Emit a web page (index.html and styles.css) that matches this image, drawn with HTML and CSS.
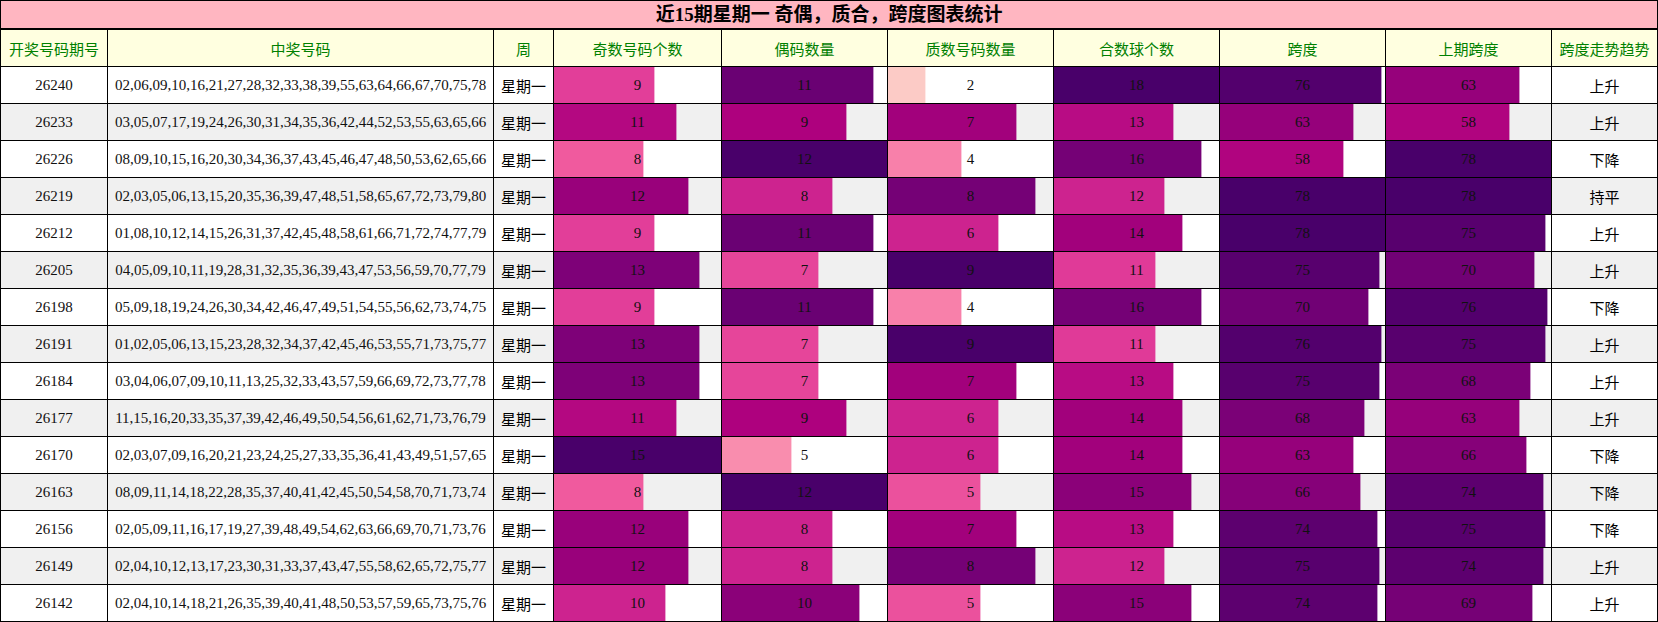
FILE: index.html
```html
<!DOCTYPE html>
<html lang="zh-CN">
<head>
<meta charset="utf-8">
<title>近15期星期一 奇偶，质合，跨度图表统计</title>
<link rel="stylesheet" href="styles.css">
</head>
<body>
<table class="stats">
  <colgroup>
    <col class="w-issue"><col class="w-nums"><col class="w-week">
    <col class="w-bar1"><col class="w-bar"><col class="w-bar"><col class="w-bar"><col class="w-bar"><col class="w-bar">
    <col class="w-trend">
  </colgroup>
  <thead>
    <tr class="title-row"><th colspan="10" class="title">近15期星期一 奇偶，质合，跨度图表统计</th></tr>
    <tr class="head-row">
      <th>开奖号码期号</th><th>中奖号码</th><th>周</th><th>奇数号码个数</th><th>偶码数量</th><th>质数号码数量</th><th>合数球个数</th><th>跨度</th><th>上期跨度</th><th>跨度走势趋势</th>
    </tr>
  </thead>
  <tbody>
    <tr>
      <td>26240</td><td>02,06,09,10,16,21,27,28,32,33,38,39,55,63,64,66,67,70,75,78</td><td class="week">星期一</td>
      <td class="bc"><div class="bw"><span class="bar" style="width:60%;--c:#e23e99"></span><span class="bv">9</span></div></td>
      <td class="bc"><div class="bw"><span class="bar" style="width:91.7%;--c:#6a0173"></span><span class="bv">11</span></div></td>
      <td class="bc"><div class="bw"><span class="bar" style="width:22.2%;--c:#fccbc6"></span><span class="bv">2</span></div></td>
      <td class="bc"><div class="bw"><span class="bar" style="width:100%;--c:#49006a"></span><span class="bv">18</span></div></td>
      <td class="bc"><div class="bw"><span class="bar" style="width:97.4%;--c:#53006d"></span><span class="bv">76</span></div></td>
      <td class="bc"><div class="bw"><span class="bar" style="width:80.8%;--c:#96017b"></span><span class="bv">63</span></div></td>
      <td class="trend">上升</td>
    </tr>
    <tr>
      <td>26233</td><td>03,05,07,17,19,24,26,30,31,34,35,36,42,44,52,53,55,63,65,66</td><td class="week">星期一</td>
      <td class="bc"><div class="bw"><span class="bar" style="width:73.3%;--c:#b40881"></span><span class="bv">11</span></div></td>
      <td class="bc"><div class="bw"><span class="bar" style="width:75%;--c:#ae017e"></span><span class="bv">9</span></div></td>
      <td class="bc"><div class="bw"><span class="bar" style="width:77.8%;--c:#a2017c"></span><span class="bv">7</span></div></td>
      <td class="bc"><div class="bw"><span class="bar" style="width:72.2%;--c:#b80c84"></span><span class="bv">13</span></div></td>
      <td class="bc"><div class="bw"><span class="bar" style="width:80.8%;--c:#96017b"></span><span class="bv">63</span></div></td>
      <td class="bc"><div class="bw"><span class="bar" style="width:74.4%;--c:#b0047f"></span><span class="bv">58</span></div></td>
      <td class="trend">上升</td>
    </tr>
    <tr>
      <td>26226</td><td>08,09,10,15,16,20,30,34,36,37,43,45,46,47,48,50,53,62,65,66</td><td class="week">星期一</td>
      <td class="bc"><div class="bw"><span class="bar" style="width:53.3%;--c:#f05a9e"></span><span class="bv">8</span></div></td>
      <td class="bc"><div class="bw"><span class="bar" style="width:100%;--c:#49006a"></span><span class="bv">12</span></div></td>
      <td class="bc"><div class="bw"><span class="bar" style="width:44.4%;--c:#f880aa"></span><span class="bv">4</span></div></td>
      <td class="bc"><div class="bw"><span class="bar" style="width:88.9%;--c:#750176"></span><span class="bv">16</span></div></td>
      <td class="bc"><div class="bw"><span class="bar" style="width:74.4%;--c:#b0047f"></span><span class="bv">58</span></div></td>
      <td class="bc"><div class="bw"><span class="bar" style="width:100%;--c:#49006a"></span><span class="bv">78</span></div></td>
      <td class="trend">下降</td>
    </tr>
    <tr>
      <td>26219</td><td>02,03,05,06,13,15,20,35,36,39,47,48,51,58,65,67,72,73,79,80</td><td class="week">星期一</td>
      <td class="bc"><div class="bw"><span class="bar" style="width:80%;--c:#99017b"></span><span class="bv">12</span></div></td>
      <td class="bc"><div class="bw"><span class="bar" style="width:66.7%;--c:#cd238f"></span><span class="bv">8</span></div></td>
      <td class="bc"><div class="bw"><span class="bar" style="width:88.9%;--c:#750176"></span><span class="bv">8</span></div></td>
      <td class="bc"><div class="bw"><span class="bar" style="width:66.7%;--c:#cd238f"></span><span class="bv">12</span></div></td>
      <td class="bc"><div class="bw"><span class="bar" style="width:100%;--c:#49006a"></span><span class="bv">78</span></div></td>
      <td class="bc"><div class="bw"><span class="bar" style="width:100%;--c:#49006a"></span><span class="bv">78</span></div></td>
      <td class="trend">持平</td>
    </tr>
    <tr>
      <td>26212</td><td>01,08,10,12,14,15,26,31,37,42,45,48,58,61,66,71,72,74,77,79</td><td class="week">星期一</td>
      <td class="bc"><div class="bw"><span class="bar" style="width:60%;--c:#e23e99"></span><span class="bv">9</span></div></td>
      <td class="bc"><div class="bw"><span class="bar" style="width:91.7%;--c:#6a0173"></span><span class="bv">11</span></div></td>
      <td class="bc"><div class="bw"><span class="bar" style="width:66.7%;--c:#cd238f"></span><span class="bv">6</span></div></td>
      <td class="bc"><div class="bw"><span class="bar" style="width:77.8%;--c:#a2017c"></span><span class="bv">14</span></div></td>
      <td class="bc"><div class="bw"><span class="bar" style="width:100%;--c:#49006a"></span><span class="bv">78</span></div></td>
      <td class="bc"><div class="bw"><span class="bar" style="width:96.2%;--c:#58006e"></span><span class="bv">75</span></div></td>
      <td class="trend">上升</td>
    </tr>
    <tr>
      <td>26205</td><td>04,05,09,10,11,19,28,31,32,35,36,39,43,47,53,56,59,70,77,79</td><td class="week">星期一</td>
      <td class="bc"><div class="bw"><span class="bar" style="width:86.7%;--c:#7e0178"></span><span class="bv">13</span></div></td>
      <td class="bc"><div class="bw"><span class="bar" style="width:58.3%;--c:#e6459a"></span><span class="bv">7</span></div></td>
      <td class="bc"><div class="bw"><span class="bar" style="width:100%;--c:#49006a"></span><span class="bv">9</span></div></td>
      <td class="bc"><div class="bw"><span class="bar" style="width:61.1%;--c:#e03a98"></span><span class="bv">11</span></div></td>
      <td class="bc"><div class="bw"><span class="bar" style="width:96.2%;--c:#58006e"></span><span class="bv">75</span></div></td>
      <td class="bc"><div class="bw"><span class="bar" style="width:89.7%;--c:#710175"></span><span class="bv">70</span></div></td>
      <td class="trend">上升</td>
    </tr>
    <tr>
      <td>26198</td><td>05,09,18,19,24,26,30,34,42,46,47,49,51,54,55,56,62,73,74,75</td><td class="week">星期一</td>
      <td class="bc"><div class="bw"><span class="bar" style="width:60%;--c:#e23e99"></span><span class="bv">9</span></div></td>
      <td class="bc"><div class="bw"><span class="bar" style="width:91.7%;--c:#6a0173"></span><span class="bv">11</span></div></td>
      <td class="bc"><div class="bw"><span class="bar" style="width:44.4%;--c:#f880aa"></span><span class="bv">4</span></div></td>
      <td class="bc"><div class="bw"><span class="bar" style="width:88.9%;--c:#750176"></span><span class="bv">16</span></div></td>
      <td class="bc"><div class="bw"><span class="bar" style="width:89.7%;--c:#710175"></span><span class="bv">70</span></div></td>
      <td class="bc"><div class="bw"><span class="bar" style="width:97.4%;--c:#53006d"></span><span class="bv">76</span></div></td>
      <td class="trend">下降</td>
    </tr>
    <tr>
      <td>26191</td><td>01,02,05,06,13,15,23,28,32,34,37,42,45,46,53,55,71,73,75,77</td><td class="week">星期一</td>
      <td class="bc"><div class="bw"><span class="bar" style="width:86.7%;--c:#7e0178"></span><span class="bv">13</span></div></td>
      <td class="bc"><div class="bw"><span class="bar" style="width:58.3%;--c:#e6459a"></span><span class="bv">7</span></div></td>
      <td class="bc"><div class="bw"><span class="bar" style="width:100%;--c:#49006a"></span><span class="bv">9</span></div></td>
      <td class="bc"><div class="bw"><span class="bar" style="width:61.1%;--c:#e03a98"></span><span class="bv">11</span></div></td>
      <td class="bc"><div class="bw"><span class="bar" style="width:97.4%;--c:#53006d"></span><span class="bv">76</span></div></td>
      <td class="bc"><div class="bw"><span class="bar" style="width:96.2%;--c:#58006e"></span><span class="bv">75</span></div></td>
      <td class="trend">上升</td>
    </tr>
    <tr>
      <td>26184</td><td>03,04,06,07,09,10,11,13,25,32,33,43,57,59,66,69,72,73,77,78</td><td class="week">星期一</td>
      <td class="bc"><div class="bw"><span class="bar" style="width:86.7%;--c:#7e0178"></span><span class="bv">13</span></div></td>
      <td class="bc"><div class="bw"><span class="bar" style="width:58.3%;--c:#e6459a"></span><span class="bv">7</span></div></td>
      <td class="bc"><div class="bw"><span class="bar" style="width:77.8%;--c:#a2017c"></span><span class="bv">7</span></div></td>
      <td class="bc"><div class="bw"><span class="bar" style="width:72.2%;--c:#b80c84"></span><span class="bv">13</span></div></td>
      <td class="bc"><div class="bw"><span class="bar" style="width:96.2%;--c:#58006e"></span><span class="bv">75</span></div></td>
      <td class="bc"><div class="bw"><span class="bar" style="width:87.2%;--c:#7b0177"></span><span class="bv">68</span></div></td>
      <td class="trend">上升</td>
    </tr>
    <tr>
      <td>26177</td><td>11,15,16,20,33,35,37,39,42,46,49,50,54,56,61,62,71,73,76,79</td><td class="week">星期一</td>
      <td class="bc"><div class="bw"><span class="bar" style="width:73.3%;--c:#b40881"></span><span class="bv">11</span></div></td>
      <td class="bc"><div class="bw"><span class="bar" style="width:75%;--c:#ae017e"></span><span class="bv">9</span></div></td>
      <td class="bc"><div class="bw"><span class="bar" style="width:66.7%;--c:#cd238f"></span><span class="bv">6</span></div></td>
      <td class="bc"><div class="bw"><span class="bar" style="width:77.8%;--c:#a2017c"></span><span class="bv">14</span></div></td>
      <td class="bc"><div class="bw"><span class="bar" style="width:87.2%;--c:#7b0177"></span><span class="bv">68</span></div></td>
      <td class="bc"><div class="bw"><span class="bar" style="width:80.8%;--c:#96017b"></span><span class="bv">63</span></div></td>
      <td class="trend">上升</td>
    </tr>
    <tr>
      <td>26170</td><td>02,03,07,09,16,20,21,23,24,25,27,33,35,36,41,43,49,51,57,65</td><td class="week">星期一</td>
      <td class="bc"><div class="bw"><span class="bar" style="width:100%;--c:#49006a"></span><span class="bv">15</span></div></td>
      <td class="bc"><div class="bw"><span class="bar" style="width:41.7%;--c:#f98dae"></span><span class="bv">5</span></div></td>
      <td class="bc"><div class="bw"><span class="bar" style="width:66.7%;--c:#cd238f"></span><span class="bv">6</span></div></td>
      <td class="bc"><div class="bw"><span class="bar" style="width:77.8%;--c:#a2017c"></span><span class="bv">14</span></div></td>
      <td class="bc"><div class="bw"><span class="bar" style="width:80.8%;--c:#96017b"></span><span class="bv">63</span></div></td>
      <td class="bc"><div class="bw"><span class="bar" style="width:84.6%;--c:#860179"></span><span class="bv">66</span></div></td>
      <td class="trend">下降</td>
    </tr>
    <tr>
      <td>26163</td><td>08,09,11,14,18,22,28,35,37,40,41,42,45,50,54,58,70,71,73,74</td><td class="week">星期一</td>
      <td class="bc"><div class="bw"><span class="bar" style="width:53.3%;--c:#f05a9e"></span><span class="bv">8</span></div></td>
      <td class="bc"><div class="bw"><span class="bar" style="width:100%;--c:#49006a"></span><span class="bv">12</span></div></td>
      <td class="bc"><div class="bw"><span class="bar" style="width:55.6%;--c:#eb519d"></span><span class="bv">5</span></div></td>
      <td class="bc"><div class="bw"><span class="bar" style="width:83.3%;--c:#8b0179"></span><span class="bv">15</span></div></td>
      <td class="bc"><div class="bw"><span class="bar" style="width:84.6%;--c:#860179"></span><span class="bv">66</span></div></td>
      <td class="bc"><div class="bw"><span class="bar" style="width:94.9%;--c:#5d006f"></span><span class="bv">74</span></div></td>
      <td class="trend">下降</td>
    </tr>
    <tr>
      <td>26156</td><td>02,05,09,11,16,17,19,27,39,48,49,54,62,63,66,69,70,71,73,76</td><td class="week">星期一</td>
      <td class="bc"><div class="bw"><span class="bar" style="width:80%;--c:#99017b"></span><span class="bv">12</span></div></td>
      <td class="bc"><div class="bw"><span class="bar" style="width:66.7%;--c:#cd238f"></span><span class="bv">8</span></div></td>
      <td class="bc"><div class="bw"><span class="bar" style="width:77.8%;--c:#a2017c"></span><span class="bv">7</span></div></td>
      <td class="bc"><div class="bw"><span class="bar" style="width:72.2%;--c:#b80c84"></span><span class="bv">13</span></div></td>
      <td class="bc"><div class="bw"><span class="bar" style="width:94.9%;--c:#5d006f"></span><span class="bv">74</span></div></td>
      <td class="bc"><div class="bw"><span class="bar" style="width:96.2%;--c:#58006e"></span><span class="bv">75</span></div></td>
      <td class="trend">下降</td>
    </tr>
    <tr>
      <td>26149</td><td>02,04,10,12,13,17,23,30,31,33,37,43,47,55,58,62,65,72,75,77</td><td class="week">星期一</td>
      <td class="bc"><div class="bw"><span class="bar" style="width:80%;--c:#99017b"></span><span class="bv">12</span></div></td>
      <td class="bc"><div class="bw"><span class="bar" style="width:66.7%;--c:#cd238f"></span><span class="bv">8</span></div></td>
      <td class="bc"><div class="bw"><span class="bar" style="width:88.9%;--c:#750176"></span><span class="bv">8</span></div></td>
      <td class="bc"><div class="bw"><span class="bar" style="width:66.7%;--c:#cd238f"></span><span class="bv">12</span></div></td>
      <td class="bc"><div class="bw"><span class="bar" style="width:96.2%;--c:#58006e"></span><span class="bv">75</span></div></td>
      <td class="bc"><div class="bw"><span class="bar" style="width:94.9%;--c:#5d006f"></span><span class="bv">74</span></div></td>
      <td class="trend">上升</td>
    </tr>
    <tr>
      <td>26142</td><td>02,04,10,14,18,21,26,35,39,40,41,48,50,53,57,59,65,73,75,76</td><td class="week">星期一</td>
      <td class="bc"><div class="bw"><span class="bar" style="width:66.7%;--c:#cd238f"></span><span class="bv">10</span></div></td>
      <td class="bc"><div class="bw"><span class="bar" style="width:83.3%;--c:#8b0179"></span><span class="bv">10</span></div></td>
      <td class="bc"><div class="bw"><span class="bar" style="width:55.6%;--c:#eb519d"></span><span class="bv">5</span></div></td>
      <td class="bc"><div class="bw"><span class="bar" style="width:83.3%;--c:#8b0179"></span><span class="bv">15</span></div></td>
      <td class="bc"><div class="bw"><span class="bar" style="width:94.9%;--c:#5d006f"></span><span class="bv">74</span></div></td>
      <td class="bc"><div class="bw"><span class="bar" style="width:88.5%;--c:#760176"></span><span class="bv">69</span></div></td>
      <td class="trend">上升</td>
    </tr>
  </tbody>
</table>
</body>
</html>
```

FILE: styles.css
```css
html, body {
  margin: 0;
  padding: 0;
  background: #fff;
}

body {
  font-family: "Liberation Serif", "Noto Sans CJK SC", serif;
  font-size: 15px;
  color: #111;
}

.stats {
  width: 1658px;
  table-layout: fixed;
  border-collapse: collapse;
}

.w-issue { width: 107px; }
.w-nums { width: 386px; }
.w-week { width: 60px; }
.w-bar1 { width: 168px; }
.w-bar { width: 166px; }
.w-trend { width: 106px; }

.stats th,
.stats td {
  border: 1px solid #000;
  padding: 0;
  text-align: center;
  vertical-align: middle;
  white-space: nowrap;
  overflow: hidden;
}

.title-row .title {
  height: 27px;
  background: #ffb6c1;
  font-size: 19px;
  font-weight: bold;
  color: #000;
  border-bottom-width: 2px;
  line-height: 27px;
}

.head-row th {
  height: 36px;
  background: #ffffe0;
  color: #008000;
  font-weight: normal;
  font-family: "Noto Sans CJK SC", sans-serif;
  font-size: 15px;
}

.stats tbody td {
  height: 36px;
}

.stats tbody tr:nth-child(even) td {
  background: #f0f0f0;
}

.week,
.trend {
  font-family: "Noto Sans CJK SC", sans-serif;
  color: #000;
}

.bc {
  padding: 0;
}

.bw {
  display: grid;
  height: 36px;
  overflow: hidden;
}

.bar,
.bv {
  grid-area: 1 / 1;
}

.bar {
  display: block;
  height: 100%;
  background: var(--c);
  box-shadow: 1px 0 0 color-mix(in srgb, var(--c) 40%, transparent);
}

.bv {
  align-self: center;
  justify-self: center;
  color: #111;
}
```
